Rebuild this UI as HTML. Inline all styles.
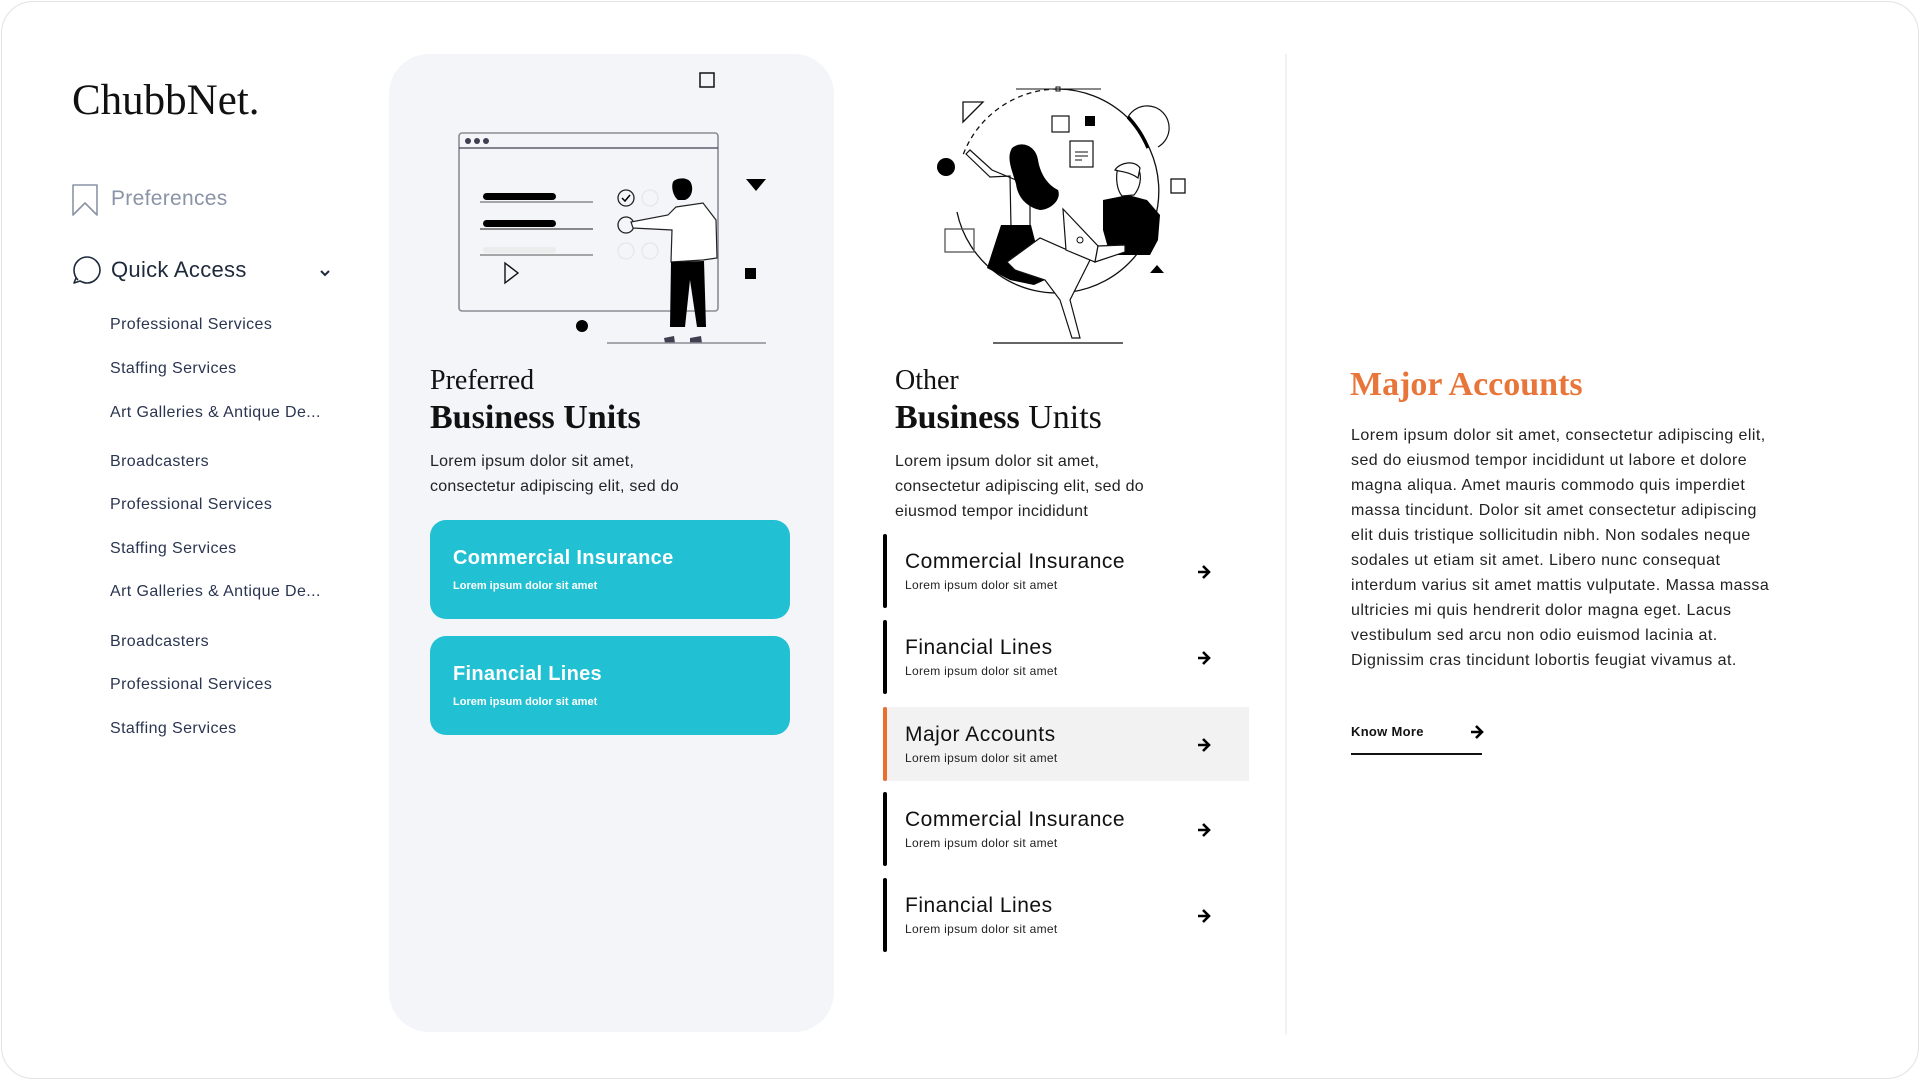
<!DOCTYPE html>
<html><head><meta charset="utf-8"><style>
*{margin:0;padding:0;box-sizing:border-box}
body{width:1920px;height:1080px;background:#fff;font-family:"Liberation Sans",sans-serif;position:relative;overflow:hidden}
.frame{position:absolute;left:1px;top:1px;width:1918px;height:1078px;border:1.5px solid #e2e2e2;border-radius:32px}
.abs{position:absolute;white-space:nowrap}
.serif{font-family:"Liberation Serif",serif}
.sub{font-size:16px;color:#2a3550;left:110px;letter-spacing:0.4px}
.panel{position:absolute;left:389px;top:54px;width:445px;height:978px;background:#f4f5f9;border-radius:40px}
.btn{position:absolute;left:430px;width:360px;background:#21c0d3;border-radius:16px;color:#fff}
.btn .t{position:absolute;left:23px;top:27px;font-size:20px;font-weight:bold;letter-spacing:0.3px}
.btn .s{position:absolute;left:23px;top:60px;font-size:11px;font-weight:bold}
.item{position:absolute;left:883px;width:366px;height:74px}
.item .bar{position:absolute;left:0;top:0;width:4px;height:100%;background:#000;border-radius:2px}
.item .t{position:absolute;left:22px;top:16px;font-size:21px;color:#111;letter-spacing:0.5px}
.item .s{position:absolute;left:22px;top:44px;font-size:12px;color:#222;letter-spacing:0.3px}
.item .a{position:absolute;left:314px;top:28px}
p{font-size:16px;line-height:25px;color:#222;letter-spacing:0.25px}
</style></head><body>
<div class="frame"></div>

<div class="abs serif" style="left:72px;top:76px;font-size:43px;color:#111">ChubbNet.</div>
<svg class="abs" style="left:72px;top:184px" width="26" height="32" viewBox="0 0 26 32"><path d="M1 1H25V31L13 19L1 31Z" fill="none" stroke="#8a94a6" stroke-width="1.6" stroke-linejoin="round"/></svg>
<div class="abs" style="left:111px;top:187px;font-size:21px;color:#8a94a6;letter-spacing:0.3px">Preferences</div>
<svg class="abs" style="left:72px;top:255px" width="30" height="30" viewBox="0 0 30 30"><path d="M6 25C3 22 2 19 2 15C2 8 8 2 15 2C22 2 28 8 28 15C28 22 22 28 15 28C12 28 10 27 8 26L2 28L4 23" fill="none" stroke="#1e2a3b" stroke-width="1.6" stroke-linejoin="round"/></svg>
<div class="abs" style="left:111px;top:257px;font-size:22px;color:#1e2a3b;letter-spacing:0.3px">Quick Access</div>
<svg class="abs" style="left:319px;top:269px" width="12" height="8" viewBox="0 0 12 8"><path d="M2 2L6 6L10 2" fill="none" stroke="#1e2a3b" stroke-width="2"/></svg>

<div class="abs sub" style="top:316px">Professional Services</div>
<div class="abs sub" style="top:360px">Staffing Services</div>
<div class="abs sub" style="top:404px">Art Galleries &amp; Antique De...</div>
<div class="abs sub" style="top:453px">Broadcasters</div>
<div class="abs sub" style="top:496px">Professional Services</div>
<div class="abs sub" style="top:540px">Staffing Services</div>
<div class="abs sub" style="top:583px">Art Galleries &amp; Antique De...</div>
<div class="abs sub" style="top:633px">Broadcasters</div>
<div class="abs sub" style="top:676px">Professional Services</div>
<div class="abs sub" style="top:720px">Staffing Services</div>

<div class="panel"></div>
<div class="abs serif" style="left:430px;top:365px;font-size:28px;color:#111">Preferred</div>
<div class="abs serif" style="left:430px;top:399px;font-size:34px;font-weight:bold;color:#111">Business Units</div>
<p class="abs" style="left:430px;top:449px">Lorem ipsum dolor sit amet,<br>consectetur adipiscing elit, sed do</p>
<div class="btn" style="top:520px;height:99px"><div class="t">Commercial Insurance</div><div class="s">Lorem ipsum dolor sit amet</div></div>
<div class="btn" style="top:636px;height:99px"><div class="t">Financial Lines</div><div class="s">Lorem ipsum dolor sit amet</div></div>

<div class="abs serif" style="left:895px;top:365px;font-size:28px;color:#111">Other</div>
<div class="abs serif" style="left:895px;top:399px;font-size:34px;color:#111"><b>Business</b> Units</div>
<p class="abs" style="left:895px;top:449px">Lorem ipsum dolor sit amet,<br>consectetur adipiscing elit, sed do<br>eiusmod tempor incididunt</p>

<div class="item" style="top:534px"><div class="bar"></div><div class="t">Commercial Insurance</div><div class="s">Lorem ipsum dolor sit amet</div><svg class="a" width="14" height="20" viewBox="0 0 14 20"><path d="M1 10H11M6 4L12 10L6 16" fill="none" stroke="#000" stroke-width="2.6"/></svg></div>
<div class="item" style="top:620px"><div class="bar"></div><div class="t">Financial Lines</div><div class="s">Lorem ipsum dolor sit amet</div><svg class="a" width="14" height="20" viewBox="0 0 14 20"><path d="M1 10H11M6 4L12 10L6 16" fill="none" stroke="#000" stroke-width="2.6"/></svg></div>
<div class="item" style="top:707px;background:#f2f2f2"><div class="bar" style="background:#e8702d"></div><div class="t">Major Accounts</div><div class="s">Lorem ipsum dolor sit amet</div><svg class="a" width="14" height="20" viewBox="0 0 14 20"><path d="M1 10H11M6 4L12 10L6 16" fill="none" stroke="#000" stroke-width="2.6"/></svg></div>
<div class="item" style="top:792px"><div class="bar"></div><div class="t">Commercial Insurance</div><div class="s">Lorem ipsum dolor sit amet</div><svg class="a" width="14" height="20" viewBox="0 0 14 20"><path d="M1 10H11M6 4L12 10L6 16" fill="none" stroke="#000" stroke-width="2.6"/></svg></div>
<div class="item" style="top:878px"><div class="bar"></div><div class="t">Financial Lines</div><div class="s">Lorem ipsum dolor sit amet</div><svg class="a" width="14" height="20" viewBox="0 0 14 20"><path d="M1 10H11M6 4L12 10L6 16" fill="none" stroke="#000" stroke-width="2.6"/></svg></div>

<div class="abs" style="left:1285px;top:54px;width:2px;height:981px;background:#f2f2f2"></div>

<div class="abs serif" style="left:1350px;top:366px;font-size:34px;font-weight:bold;color:#e8763a">Major Accounts</div>
<p class="abs" style="left:1351px;top:423px;width:480px;white-space:nowrap;line-height:25px;letter-spacing:0.45px">Lorem ipsum dolor sit amet, consectetur adipiscing elit,<br>sed do eiusmod tempor incididunt ut labore et dolore<br>magna aliqua. Amet mauris commodo quis imperdiet<br>massa tincidunt. Dolor sit amet consectetur adipiscing<br>elit duis tristique sollicitudin nibh. Non sodales neque<br>sodales ut etiam sit amet. Libero nunc consequat<br>interdum varius sit amet mattis vulputate. Massa massa<br>ultricies mi quis hendrerit dolor magna eget. Lacus<br>vestibulum sed arcu non odio euismod lacinia at.<br>Dignissim cras tincidunt lobortis feugiat vivamus at.</p>
<div class="abs" style="left:1351px;top:724px;font-size:13px;font-weight:bold;color:#111;letter-spacing:0.3px">Know More</div>
<svg class="abs" style="left:1470px;top:722px" width="14" height="20" viewBox="0 0 14 20"><path d="M1 10H11M6 4L12 10L6 16" fill="none" stroke="#000" stroke-width="2.6"/></svg>
<div class="abs" style="left:1351px;top:753px;width:131px;height:2px;background:#111"></div>

<svg class="abs" style="left:0;top:0" width="1920" height="1080" viewBox="0 0 1920 1080">
 <rect x="700" y="73" width="14" height="14" fill="none" stroke="#111" stroke-width="1.5"/>
 <rect x="459" y="133" width="259" height="178" rx="3" fill="none" stroke="#8b8b96" stroke-width="1.6"/>
 <line x1="459" y1="148" x2="718" y2="148" stroke="#3f3f52" stroke-width="1.2"/>
 <circle cx="468" cy="141" r="3" fill="#3f3f52"/><circle cx="477" cy="141" r="3" fill="#3f3f52"/><circle cx="486" cy="141" r="3" fill="#3f3f52"/>
 <rect x="483" y="193" width="73" height="7" rx="3.5" fill="#000"/>
 <line x1="480" y1="202" x2="593" y2="202" stroke="#555" stroke-width="1"/>
 <rect x="483" y="220" width="73" height="7" rx="3.5" fill="#000"/>
 <line x1="480" y1="229" x2="593" y2="229" stroke="#888" stroke-width="2"/>
 <rect x="483" y="247" width="73" height="6" rx="3" fill="#ececec"/>
 <line x1="480" y1="255" x2="593" y2="255" stroke="#555" stroke-width="1"/>
 <circle cx="626" cy="198" r="8" fill="none" stroke="#222" stroke-width="1.3"/><path d="M622 198L625 201L630 195" fill="none" stroke="#000" stroke-width="1.5"/>
 <circle cx="650" cy="198" r="8" fill="none" stroke="#e6e6e6" stroke-width="1.3"/>
 <circle cx="626" cy="225" r="8" fill="none" stroke="#222" stroke-width="1.3"/>
 <circle cx="626" cy="251" r="8" fill="none" stroke="#e6e6e6" stroke-width="1.3"/><circle cx="650" cy="251" r="8" fill="none" stroke="#e6e6e6" stroke-width="1.3"/>
 <path d="M505 263L518 273L505 283Z" fill="none" stroke="#111" stroke-width="1.4"/>
 <path d="M676 207L703 203L716 220L717 258L703 260L671 262L672 230L633 228L631 222L668 215Z" fill="#fff" stroke="#222" stroke-width="1.2"/>
 <path d="M673 182C675 178 688 176 691 183C694 190 691 198 685 200L678 200C673 196 671 187 673 182Z" fill="#000"/>
 <path d="M671 262L704 261L706 327L697 327L690 280L685 327L670 327Z" fill="#000"/>
 <path d="M665 343L664 338L674 336L675 343Z M690 343L690 338L701 336L702 343Z" fill="#3f3f52"/>
 <path d="M746 179H766L756 191Z" fill="#000"/>
 <rect x="745" y="268" width="11" height="11" fill="#000"/>
 <circle cx="582" cy="326" r="6" fill="#000"/>
 <line x1="607" y1="343" x2="766" y2="343" stroke="#8b8b96" stroke-width="1.5"/>

 <line x1="1016" y1="89" x2="1101" y2="89" stroke="#111" stroke-width="1"/>
 <rect x="1056" y="87" width="4" height="4" fill="#fff" stroke="#111"/>
 <path d="M1058 89A102 102 0 0 0 963 155" fill="none" stroke="#111" stroke-width="1.3" stroke-dasharray="5 4"/>
 <path d="M1058 89A102 102 0 1 1 957 212" fill="none" stroke="#111" stroke-width="1.3"/>
 <path d="M1128 117A102 102 0 0 1 1148 148" fill="none" stroke="#000" stroke-width="3.5"/>
 <path d="M1128 117A22 22 0 1 1 1158 147" fill="none" stroke="#111" stroke-width="1.2"/>
 <path d="M963 102H983L963 122Z" fill="none" stroke="#111" stroke-width="1.3"/>
 <circle cx="946" cy="167" r="9" fill="#000"/>
 <rect x="1052" y="116" width="17" height="16" fill="#fff" stroke="#111" stroke-width="1.2"/>
 <rect x="1085" y="116" width="10" height="10" fill="#000"/>
 <rect x="1070" y="141" width="23" height="26" fill="#fff" stroke="#111" stroke-width="1.2"/>
 <path d="M1075 152H1088M1075 156H1088M1075 160H1082" stroke="#111"/>
 <rect x="1171" y="179" width="14" height="14" fill="none" stroke="#111" stroke-width="1.3"/>
 <rect x="945" y="229" width="29" height="23" fill="none" stroke="#555" stroke-width="1.3"/>
 <path d="M1150 273L1157 265L1164 273Z" fill="#000"/>
 <line x1="993" y1="343" x2="1123" y2="343" stroke="#333" stroke-width="1.5"/>
 <path d="M966 154L990 177L1010 176L1011 228L1030 228L1030 195L1016 180L992 170L970 150Z" fill="#fff" stroke="#111" stroke-width="1.2"/>
 <path d="M1012 148C1022 140 1036 146 1038 160C1040 172 1046 184 1058 190C1062 200 1050 210 1040 210C1030 208 1018 200 1016 184C1012 170 1006 158 1012 148Z" fill="#000"/>
 <path d="M1001 225L1031 225L1045 280L1034 285L1010 280L987 268Z" fill="#000"/>
 <path d="M1103 200L1128 195L1147 200L1160 215L1158 240L1150 255L1110 255L1103 230Z" fill="#000"/>
 <path d="M1117 172C1118 165 1132 163 1139 170C1142 178 1140 188 1134 195L1122 196C1117 190 1116 180 1117 172Z" fill="#fff" stroke="#111" stroke-width="1.2"/>
 <path d="M1115 170C1120 162 1135 160 1140 168L1138 178C1130 172 1122 172 1115 170Z" fill="#fff" stroke="#111" stroke-width="1.2"/>
 <path d="M1007 262L1040 238L1090 260L1070 300L1080 338L1072 338L1060 300L1045 280L1015 270Z" fill="#fff" stroke="#111" stroke-width="1.2"/>
 <path d="M1063 209L1098 246L1095 262L1066 250Z" fill="#fff" stroke="#111" stroke-width="1.2"/>
 <path d="M1095 262L1125 252L1125 245L1098 246Z" fill="#fff" stroke="#111" stroke-width="1.2"/>
 <circle cx="1080" cy="240" r="3" fill="none" stroke="#111"/>
</svg>
</body></html>
